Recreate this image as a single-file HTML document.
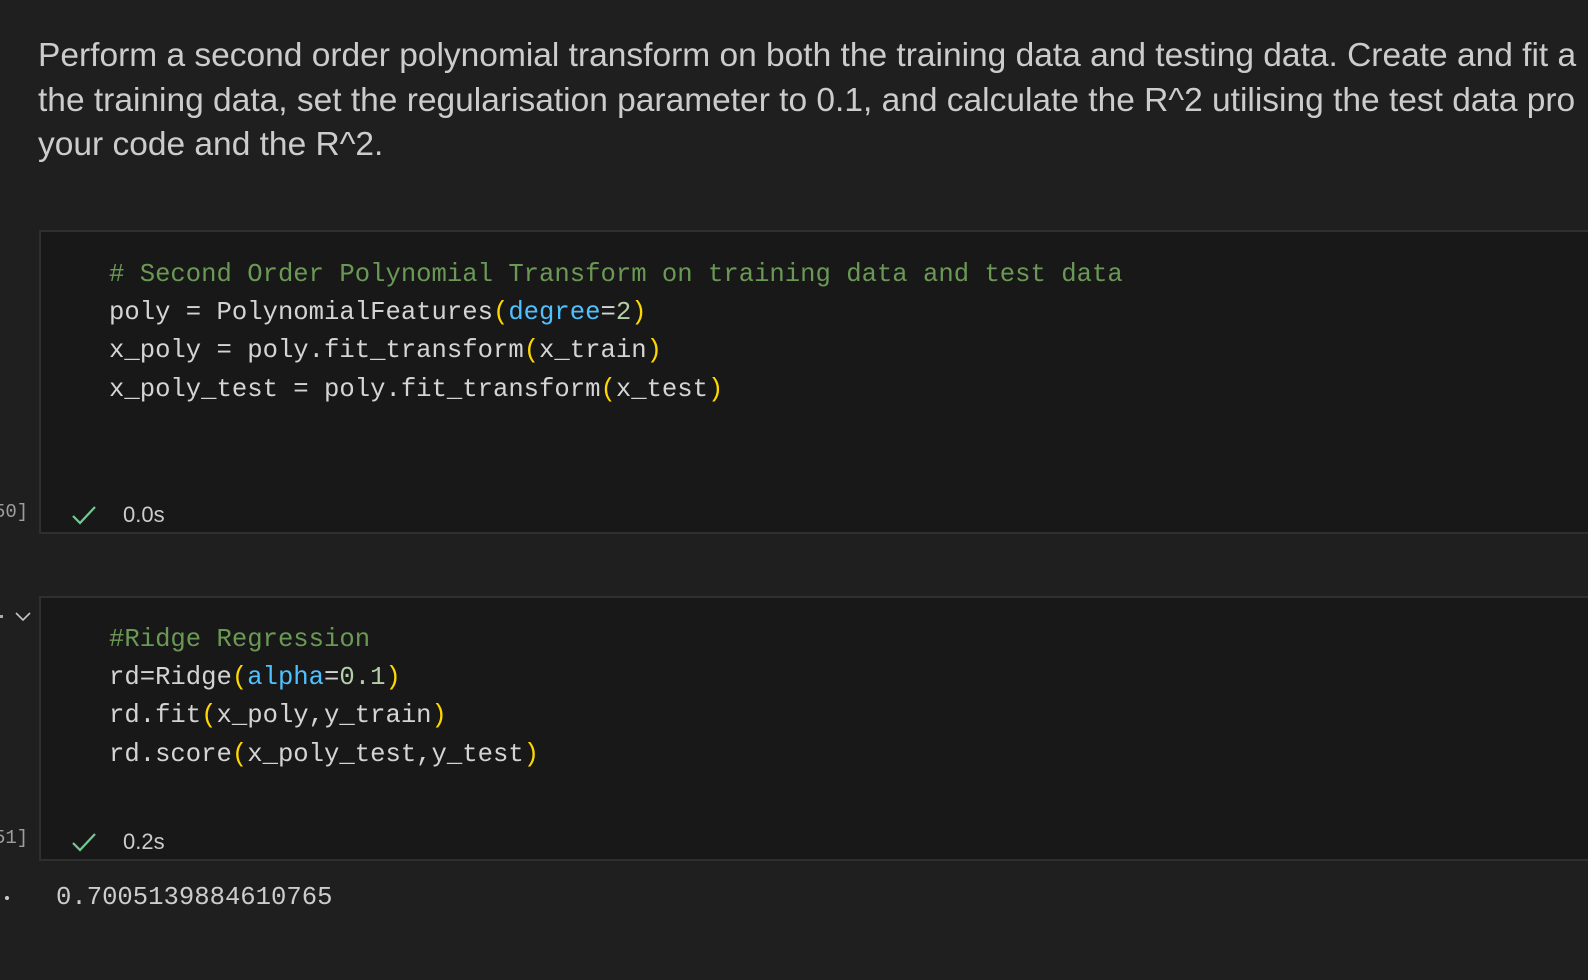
<!DOCTYPE html>
<html><head><meta charset="utf-8"><style>
html,body{margin:0;padding:0;background:#1f1f1f;width:1588px;height:980px;overflow:hidden;position:relative}
.md{position:absolute;left:38px;top:34px;font-family:"Liberation Sans",sans-serif;font-size:33.5px;line-height:44.5px;color:#cccccc;white-space:nowrap}
.cell{position:absolute;left:39px;width:1560px;background:#181818;border:2px solid #2f2f2f;box-sizing:border-box}
.code{position:absolute;left:68px;font-family:"Liberation Mono",monospace;font-size:25.6px;line-height:38.2px;color:#d4d4d4;white-space:pre}
.c{color:#6a9955}.p{color:#4fc1ff}.y{color:#ffd700}.n{color:#b5cea8}
.st{position:absolute;left:30px;font-family:"Liberation Sans",sans-serif;font-size:22px;color:#cccccc}
.st svg{position:absolute;left:0;top:2px}
.st span{position:absolute;left:52px;top:0}
.ex{position:absolute;font-family:"Liberation Mono",monospace;font-size:19px;color:#9d9d9d}
.out{position:absolute;left:56px;top:883px;font-family:"Liberation Mono",monospace;font-size:25.6px;color:#cccccc}
</style></head><body>
<div class="md">Perform a second order polynomial transform on both the training data and testing data. Create and fit a<br>the training data, set the regularisation parameter to 0.1, and calculate the R^2 utilising the test data pro<br>your code and the R^2.</div>

<div class="cell" style="top:230px;height:304px">
<div class="code" style="top:24px"><span class="c"># Second Order Polynomial Transform on training data and test data</span>
poly = PolynomialFeatures<span class="y">(</span><span class="p">degree</span>=<span class="n">2</span><span class="y">)</span>
x_poly = poly.fit_transform<span class="y">(</span>x_train<span class="y">)</span>
x_poly_test = poly.fit_transform<span class="y">(</span>x_test<span class="y">)</span></div>
<div class="st" style="top:270px"><svg width="26" height="22" viewBox="0 0 26 22"><path d="M2 12 L9 19 L24 3" fill="none" stroke="#73c991" stroke-width="2.2"/></svg><span>0.0s</span></div>
</div>
<div class="ex" style="left:-6px;top:501px">50]</div>

<div class="cell" style="top:596px;height:265px">
<div class="code" style="top:23px"><span class="c">#Ridge Regression</span>
rd=Ridge<span class="y">(</span><span class="p">alpha</span>=<span class="n">0.1</span><span class="y">)</span>
rd.fit<span class="y">(</span>x_poly,y_train<span class="y">)</span>
rd.score<span class="y">(</span>x_poly_test,y_test<span class="y">)</span></div>
<div class="st" style="top:231px"><svg width="26" height="22" viewBox="0 0 26 22"><path d="M2 12 L9 19 L24 3" fill="none" stroke="#73c991" stroke-width="2.2"/></svg><span>0.2s</span></div>
</div>
<div class="ex" style="left:-6px;top:827px">51]</div>
<svg style="position:absolute;left:14px;top:610px" width="18" height="12"><path d="M2 3 L9 10 L16 3" fill="none" stroke="#c5c5c5" stroke-width="1.6"/></svg>
<div style="position:absolute;left:0;top:615px;width:3px;height:3px;background:#aaa"></div>
<div style="position:absolute;left:5px;top:896px;width:4px;height:4px;border-radius:2px;background:#ccc"></div>
<div class="out">0.7005139884610765</div>
</body></html>
